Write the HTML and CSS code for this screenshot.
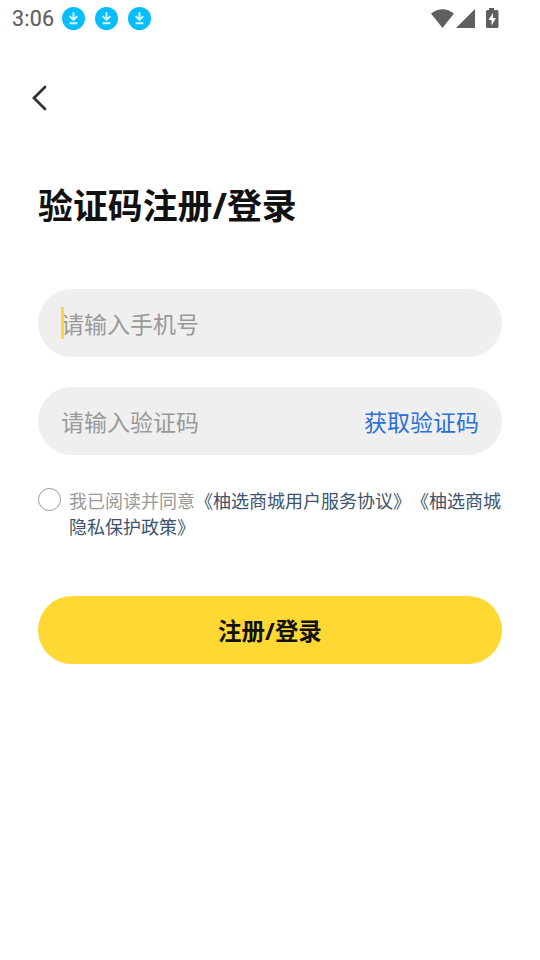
FILE: index.html
```html
<!DOCTYPE html>
<html lang="zh-CN">
<head>
<meta charset="utf-8">
<title>登录</title>
<link rel="stylesheet" href="styles.css">
</head>
<body>
<header class="status">
  <span class="time">3:06</span>
  <div class="notices">
    <svg class="dl" viewBox="0 0 24 24"><circle cx="12" cy="12" r="12"/><path d="M12 5.500v7.500M8 9.500L12 13.500l4-4M8 17h8"/></svg>
    <svg class="dl" viewBox="0 0 24 24"><circle cx="12" cy="12" r="12"/><path d="M12 5.500v7.500M8 9.500L12 13.500l4-4M8 17h8"/></svg>
    <svg class="dl" viewBox="0 0 24 24"><circle cx="12" cy="12" r="12"/><path d="M12 5.500v7.500M8 9.500L12 13.500l4-4M8 17h8"/></svg>
  </div>
  <svg class="system" viewBox="0 0 68 20"><path d="M0 4.500Q11.500-4 23 4.500L11.500 19z"/><path d="M44 0v19H25z"/><path fill-rule="evenodd" d="M58 -1h5v2h3q1.500 0 1.500 1.500V17.500q0 1.500-1.500 1.500H56.500q-1.500 0-1.500-1.500V2.500Q55 1 56.500 1H58zM62 4l-4.500 7h3v5.500l4.500-7.500h-3z"/></svg>
</header>
<nav class="nav"><svg class="back" viewBox="0 0 16 26"><path d="M14 3L3 14l11 11"/></svg></nav>
<main class="login">
  <h1>验证码注册<span class="slash">/</span>登录</h1>
  <div class="field"><i class="caret"></i><span>请输入手机号</span></div>
  <div class="field"><span>请输入验证码</span><a class="code">获取验证码</a></div>
  <div class="agree"><span class="radio"></span><p>我已阅读并同意<a>《柚选商城用户服务协议》《柚选商城<br>隐私保护政策》</a></p></div>
  <button class="submit">注册<span class="slash">/</span>登录</button>
</main>
</body>
</html>
```

FILE: styles.css
```css
* { box-sizing: border-box; }
body { margin: 0; background: #fff; font-family: "Noto Sans CJK SC", sans-serif; text-spacing-trim: space-all; }
.status { display: flex; align-items: center; height: 37px; padding: 0 41px 0 12px; }
.time { width: 50px; font: 400 21.5px Roboto, sans-serif; letter-spacing: 0.2px; color: #5f5f5f; -webkit-text-stroke: 0.2px #5f5f5f; }
.notices { display: flex; gap: 10px; flex: 1; }
.dl { width: 23px; height: 23px; fill: #08bdfb; }
.dl path { fill: none; stroke: #d9f7ff; stroke-width: 2; }
.system { width: 68px; height: 20px; fill: #5f5f5f; overflow: visible; }
.nav { height: 120px; padding: 47px 0 0 31px; }
.back { display: block; width: 16px; height: 26px; fill: none; stroke: #333; stroke-width: 2.8; stroke-linecap: round; overflow: visible; }
.login { padding: 22px 38px 0; }
h1 { margin: 0 0 59px; font-size: 34.9px; line-height: 51px; font-weight: 700; color: #111; }
.slash { font-family: "Noto Sans", sans-serif; line-height: 1; }
.field { display: flex; align-items: center; justify-content: space-between; position: relative; height: 68px; margin-bottom: 30px; padding: 0 23px 1px; border-radius: 34px; background: #efefef; font-size: 23px; color: #999; }
.caret { position: absolute; left: 23px; top: 18px; width: 3px; height: 32px; background: #ffd930; }
.code { color: #2b70d8; }
.agree { display: flex; gap: 8px; margin-top: 32px; }
.radio { flex: none; width: 23px; height: 23px; margin-top: 1px; border: 1.500px solid #999; border-radius: 50%; }
.agree p { margin: 0; font-size: 18px; line-height: 26px; color: #999; white-space: nowrap; }
.agree a { color: #3b536e; }
.submit { display: block; width: 100%; height: 68px; margin-top: 57px; padding: 0 0 1px; border: 0; border-radius: 34px; background: #ffd833; font: 700 23.5px "Noto Sans CJK SC", sans-serif; color: #111; }
```
